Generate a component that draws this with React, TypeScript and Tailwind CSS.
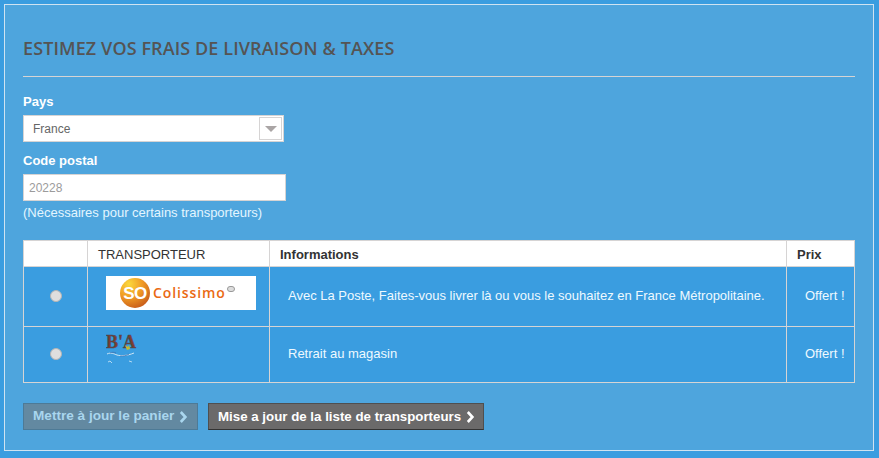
export default function App() {
  return (
    <div className="h-[458px] w-[879px] overflow-hidden bg-[#3a9de0] pl-1 pr-[5px] pt-1 font-['Liberation_Sans',Arial,sans-serif] text-xs">
      <div className="h-[447px] border border-[#cfe3f1] bg-[#4ea5dd] pl-[18px] pr-[18px] pt-[33px]">
        <h3 className="h-[38px] font-['Open_Sans',sans-serif] text-[18px] font-semibold uppercase leading-[20px] tracking-[0.1px] text-[#555454]">Estimez vos frais de livraison &amp; taxes</h3>
        <div className="h-px bg-[#d6d4d4]" />
        <div className="mt-[17px] text-[13px] font-bold leading-4 text-white">Pays</div>
        <div className="mt-[5px] flex h-[27px] w-[261px] items-center justify-between border border-[#d6d4d4] bg-white pl-[9px] pr-[1px]">
          <span className="text-xs text-[#666666]">France</span>
          <span className="flex h-[23px] w-[23px] items-center justify-center border border-[#d6d4d4] bg-white">
            <span className="h-0 w-0 border-x-[6px] border-t-[6px] border-x-transparent border-t-[#aaa5a5]" />
          </span>
        </div>
        <div className="mt-[11px] text-[13px] font-bold leading-4 text-white">Code postal</div>
        <div className="mt-[5px] flex h-[27px] w-[263px] items-center border border-[#d6d4d4] bg-white pl-[5px] text-xs text-[#9c9b9b]">20228</div>
        <div className="mt-[4px] text-[13px] leading-4 text-[#e3f5ff]">(Nécessaires pour certains transporteurs)</div>

        <table className="mt-[19px] w-[831px] table-fixed border-collapse border border-[#d6d4d4]">
          <colgroup>
            <col className="w-[64px]" />
            <col className="w-[182px]" />
            <col className="w-[517px]" />
            <col className="w-[68px]" />
          </colgroup>
          <thead>
            <tr className="h-[26px] bg-white text-left text-[13px] text-[#333333]">
              <th className="border border-[#d6d4d4]" />
              <th className="border border-[#d6d4d4] pl-[10px] pt-[2px] font-normal">TRANSPORTEUR</th>
              <th className="border border-[#d6d4d4] pl-[10px] pt-[2px] font-bold">Informations</th>
              <th className="border border-[#d6d4d4] pl-[10px] pt-[2px] font-bold">Prix</th>
            </tr>
          </thead>
          <tbody className="bg-[#3a9de0] text-[13px] text-[#eef9ff]">
            <tr className="h-[60px]">
              <td className="border border-[#d6d4d4]"><Radio /></td>
              <td className="border border-[#d6d4d4] pb-[8px] pl-[18px]">
                <div className="flex h-[34px] w-[150px] items-center gap-[3px] bg-white pl-[14px]">
                  <svg width="30" height="30" viewBox="0 0 30 30" className="shrink-0">
                    <defs>
                      <radialGradient id="so" cx="30%" cy="20%" r="90%">
                        <stop offset="0" stopColor="#fbd83c" />
                        <stop offset="0.5" stopColor="#f09a24" />
                        <stop offset="1" stopColor="#c4561a" />
                      </radialGradient>
                    </defs>
                    <circle cx="15" cy="15" r="15" fill="url(#so)" />
                    <text x="15" y="20.5" textAnchor="middle" fontFamily="Liberation Sans" fontWeight="700" fontSize="17" letterSpacing="-0.5" fill="#fff">SO</text>
                  </svg>
                  <span className="font-['Open_Sans',sans-serif] text-[14px] font-semibold leading-none tracking-[0.9px] text-[#ea6a14]">Colissimo</span>
                  <span className="mb-[8px] ml-[-2px] h-[6px] w-[8px] rounded-full border border-[#999999] bg-[#dddddd]" />
                </div>
              </td>
              <td className="border border-[#d6d4d4] pb-[2px] pl-[18px]">Avec La Poste, Faites-vous livrer là ou vous le souhaitez en France Métropolitaine.</td>
              <td className="border border-[#d6d4d4] pb-[2px] pl-[18px]">Offert !</td>
            </tr>
            <tr className="h-[56px]">
              <td className="border border-[#d6d4d4]"><Radio /></td>
              <td className="border border-[#d6d4d4] pb-[11px] pl-[18px]">
                <svg width="31" height="32" viewBox="0 0 31 32" className="block">
                  <text x="0" y="15" fontFamily="Liberation Serif" fontWeight="700" fontSize="18" fill="#7d3d30" stroke="#3c4a5c" strokeWidth="0.5">B'A</text>
                  <path d="M19 12l3 2 1-2 1 4-3 1z" fill="#c8b92c" />
                  <path d="M1 21c4-2 7 0 10 1s10 1 17-2" fill="none" stroke="#cfe6f5" strokeWidth="1" />
                  <path d="M4 20c2-1 4-1 6 0M14 23c3 0 6 0 9-2" fill="none" stroke="#3d6ca8" strokeWidth="0.7" />
                  <path d="M2 29l2-1 2 2M23 28l3 1" fill="none" stroke="#d4e8f5" strokeWidth="0.8" />
                </svg>
              </td>
              <td className="border border-[#d6d4d4] pb-[2px] pl-[18px]">Retrait au magasin</td>
              <td className="border border-[#d6d4d4] pb-[2px] pl-[18px]">Offert !</td>
            </tr>
          </tbody>
        </table>

        <div className="mt-5 flex gap-[10px]">
          <button className="flex h-[27px] w-[175px] items-center gap-[5px] border border-[#4d7a96] bg-[#6389a1] pl-[9px] text-[13.6px] font-bold text-[#a9d6ee]">
            Mettre à jour le panier <Chevron />
          </button>
          <button className="flex h-[27px] w-[276px] items-center gap-[5px] border border-[#4f4f4f] border-b-[#333333] bg-[#6b6a6a] pl-[9px] text-[13.3px] font-bold text-white">
            Mise a jour de la liste de transporteurs <Chevron />
          </button>
        </div>
      </div>
    </div>
  );
}

function Radio() {
  return <div className="mx-auto mb-[2px] h-3 w-3 rounded-full border border-[#b5b5b5] bg-[#dedede]" />;
}

function Chevron() {
  return (
    <svg width="9" height="12" viewBox="0 0 9 12" className="shrink-0">
      <path d="M1.8 1l4.6 5-4.6 5" fill="none" stroke="currentColor" strokeWidth="2.6" />
    </svg>
  );
}
